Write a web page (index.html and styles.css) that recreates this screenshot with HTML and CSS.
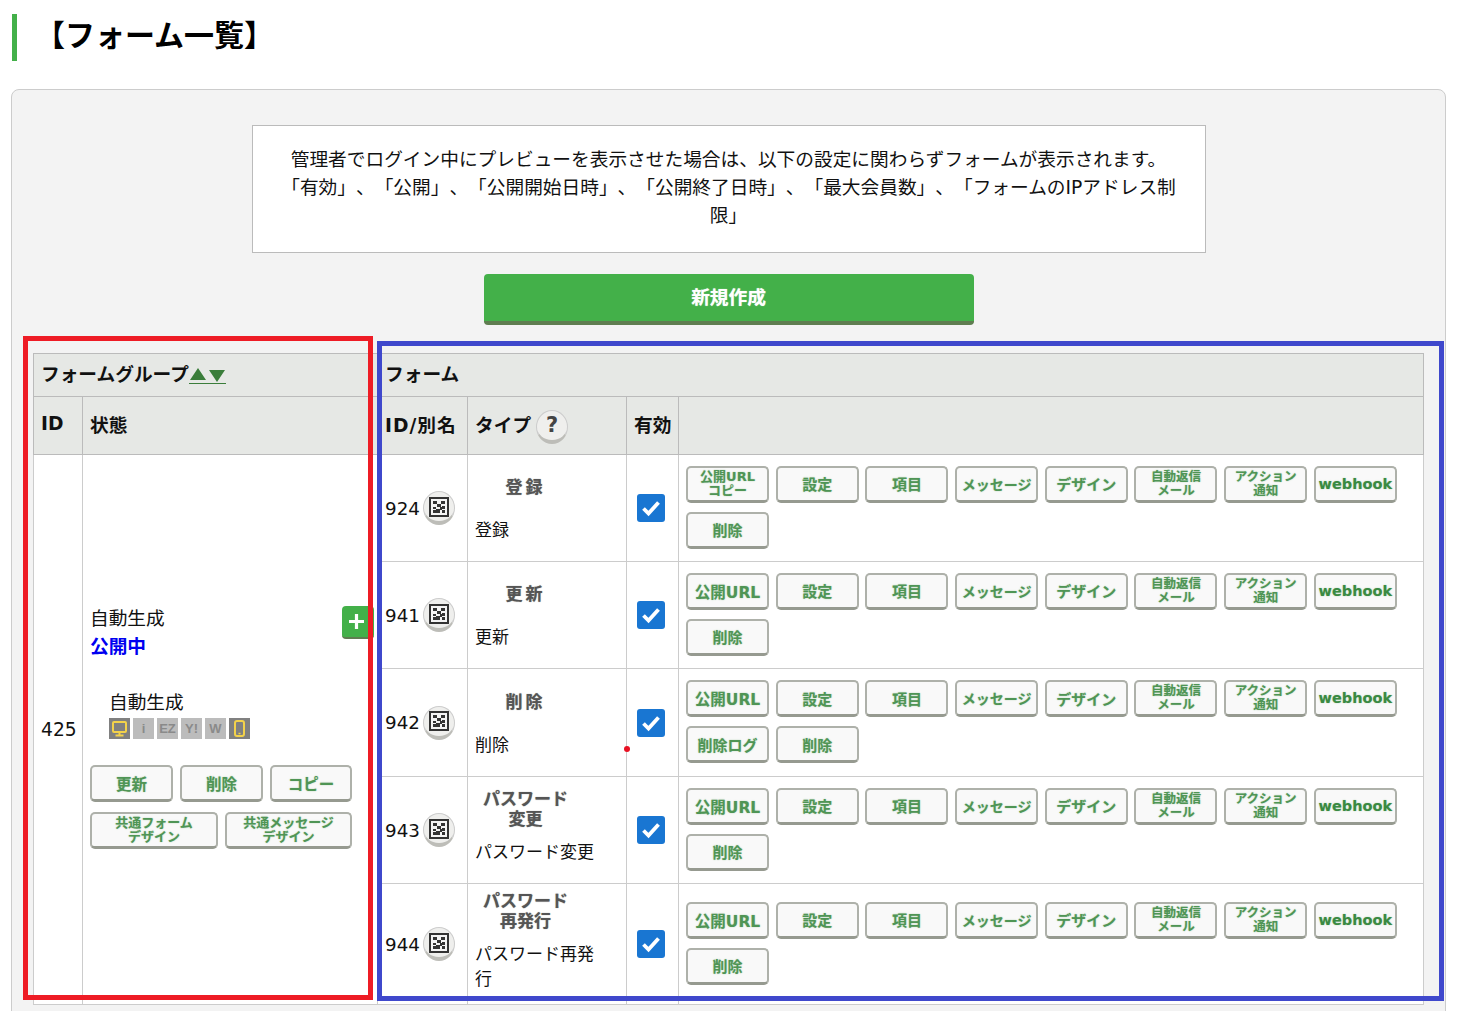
FILE: index.html
```html
<!DOCTYPE html>
<html lang="ja">
<head>
<meta charset="utf-8">
<title>フォーム一覧</title>
<link rel="stylesheet" href="styles.css">
</head>
<body>
<div class="page">
  <svg width="0" height="0" class="defs"><defs>
    <symbol id="qr" viewBox="0 0 20 20">
      <rect x="1" y="1" width="18" height="18" fill="#f4f4f4" stroke="#333" stroke-width="2"/>
      <path fill="#333" d="M4 4h4v3H4zM12 4h4v3h-4zM8 7h4v3H8zM4 10h3v2H4zM11 10h2v3h-2zM13 9h3v3h-3zM7 12h4v4H7zM4 13h3v3H4zM13 13h3v3h-3z"/>
    </symbol>
  </defs></svg>
  <h1 class="title">【フォーム一覧】</h1>
  <div class="panel">
    <div class="notice">管理者でログイン中にプレビューを表示させた場合は、以下の設定に関わらずフォームが表示されます。<br>「有効」、「公開」、「公開開始日時」、「公開終了日時」、「最大会員数」、「フォームのIPアドレス制<br>限」</div>
    <a class="new-btn">新規作成</a>
    <table class="grid">
      <colgroup><col class="c-id"><col class="c-state"><col class="c-fid"><col class="c-type"><col class="c-on"><col class="c-act"></colgroup>
      <thead>
        <tr class="h1">
          <th colspan="2">フォームグループ<a class="sort"><svg width="37" height="16" viewBox="0 0 37 16"><path fill="#3a7d3a" d="M1 12L9 0l8 12zM20 2h16l-8 12z"/><path stroke="#3a7d3a" d="M0 15.500h37"/></svg></a></th>
          <th colspan="4">フォーム</th>
        </tr>
        <tr class="h2">
          <th>ID</th><th>状態</th><th class="tight">ID/別名</th>
          <th><span class="with-help">タイプ<span class="round help">?</span></span></th>
          <th>有効</th><th></th>
        </tr>
      </thead>
      <tbody>
        <tr class="r1">
          <td rowspan="5">425</td>
          <td rowspan="5" class="group">
            <a class="plus"><svg viewBox="0 0 14 14" width="15" height="15"><path d="M7 0v14M0 7h14" stroke="#fff" stroke-width="3"/></svg></a>
            <div class="gname">自動生成</div>
            <div class="gstate">公開中</div>
            <div class="gsub">自動生成</div>
            <div class="devices">
              <span class="dev dev-on"><svg viewBox="0 0 21 21" width="21" height="21"><rect x="4" y="4" width="13" height="10" rx="1" fill="none" stroke="#f3d24a" stroke-width="2"/><path d="M10.500 14v3M6.500 17.500h8" stroke="#f3d24a" stroke-width="2"/></svg></span>
              <span class="dev">i</span><span class="dev">EZ</span><span class="dev">Y!</span><span class="dev">W</span>
              <span class="dev dev-on"><svg viewBox="0 0 21 21" width="21" height="21"><rect x="6" y="3" width="9" height="15" rx="2" fill="none" stroke="#f3d24a" stroke-width="2"/><path d="M9.500 15.500h2" stroke="#f3d24a" stroke-width="1.500"/></svg></span>
            </div>
            <div class="gbtns">
              <a class="btn s16 w3">更新</a><a class="btn s16 w3">削除</a><a class="btn s16 w3">コピー</a>
              <a class="btn s13 w2">共通フォーム<br>デザイン</a><a class="btn s13 w2">共通メッセージ<br>デザイン</a>
            </div>
          </td>
          <td><span class="fid">924<span class="round"><svg width="20" height="20"><use href="#qr"/></svg></span></span></td>
          <td class="type"><div class="tlabel wide">登録</div><div class="tname">登録</div></td>
          <td class="on"><span class="check"><svg viewBox="0 0 28 28" width="28" height="28"><path d="M6.500 14.500l5 5 10-11" fill="none" stroke="#fff" stroke-width="3.800"/></svg></span></td>
          <td class="acts"><div class="btns">
            <a class="btn s13">公開URL<br>コピー</a><a class="btn s15">設定</a><a class="btn s15">項目</a><a class="btn s14">メッセージ</a><a class="btn s15">デザイン</a><a class="btn s12">自動返信<br>メール</a><a class="btn s12">アクション<br>通知</a><a class="btn hook">webhook</a><a class="btn s15">削除</a>
          </div></td>
        </tr>
        <tr class="r1">
          <td><span class="fid">941<span class="round"><svg width="20" height="20"><use href="#qr"/></svg></span></span></td>
          <td class="type"><div class="tlabel wide">更新</div><div class="tname">更新</div></td>
          <td class="on"><span class="check"><svg viewBox="0 0 28 28" width="28" height="28"><path d="M6.500 14.500l5 5 10-11" fill="none" stroke="#fff" stroke-width="3.800"/></svg></span></td>
          <td class="acts"><div class="btns">
            <a class="btn s16">公開URL</a><a class="btn s15">設定</a><a class="btn s15">項目</a><a class="btn s14">メッセージ</a><a class="btn s15">デザイン</a><a class="btn s12">自動返信<br>メール</a><a class="btn s12">アクション<br>通知</a><a class="btn hook">webhook</a><a class="btn s15">削除</a>
          </div></td>
        </tr>
        <tr class="r3">
          <td><span class="fid">942<span class="round"><svg width="20" height="20"><use href="#qr"/></svg></span></span></td>
          <td class="type"><div class="tlabel wide">削除</div><div class="tname">削除</div></td>
          <td class="on"><span class="check"><svg viewBox="0 0 28 28" width="28" height="28"><path d="M6.500 14.500l5 5 10-11" fill="none" stroke="#fff" stroke-width="3.800"/></svg></span></td>
          <td class="acts"><div class="btns">
            <a class="btn s16">公開URL</a><a class="btn s15">設定</a><a class="btn s15">項目</a><a class="btn s14">メッセージ</a><a class="btn s15">デザイン</a><a class="btn s12">自動返信<br>メール</a><a class="btn s12">アクション<br>通知</a><a class="btn hook">webhook</a><a class="btn s15">削除ログ</a><a class="btn s15">削除</a>
          </div></td>
        </tr>
        <tr class="r1">
          <td><span class="fid">943<span class="round"><svg width="20" height="20"><use href="#qr"/></svg></span></span></td>
          <td class="type"><div class="tlabel">パスワード<br>変更</div><div class="tname">パスワード変更</div></td>
          <td class="on"><span class="check"><svg viewBox="0 0 28 28" width="28" height="28"><path d="M6.500 14.500l5 5 10-11" fill="none" stroke="#fff" stroke-width="3.800"/></svg></span></td>
          <td class="acts"><div class="btns">
            <a class="btn s16">公開URL</a><a class="btn s15">設定</a><a class="btn s15">項目</a><a class="btn s14">メッセージ</a><a class="btn s15">デザイン</a><a class="btn s12">自動返信<br>メール</a><a class="btn s12">アクション<br>通知</a><a class="btn hook">webhook</a><a class="btn s15">削除</a>
          </div></td>
        </tr>
        <tr class="r5">
          <td><span class="fid">944<span class="round"><svg width="20" height="20"><use href="#qr"/></svg></span></span></td>
          <td class="type"><div class="tlabel">パスワード<br>再発行</div><div class="tname">パスワード再発行</div></td>
          <td class="on"><span class="check"><svg viewBox="0 0 28 28" width="28" height="28"><path d="M6.500 14.500l5 5 10-11" fill="none" stroke="#fff" stroke-width="3.800"/></svg></span></td>
          <td class="acts"><div class="btns">
            <a class="btn s16">公開URL</a><a class="btn s15">設定</a><a class="btn s15">項目</a><a class="btn s14">メッセージ</a><a class="btn s15">デザイン</a><a class="btn s12">自動返信<br>メール</a><a class="btn s12">アクション<br>通知</a><a class="btn hook">webhook</a><a class="btn s15">削除</a>
          </div></td>
        </tr>
      </tbody>
    </table>
  </div>
  <div class="mark red"></div>
  <div class="mark blue"></div>
  <div class="dot"></div>
</div>
</body>
</html>
```
FILE: styles.css
```css
* { box-sizing: border-box; }
html, body { margin: 0; height: 100%; overflow: hidden; background: #fff; }
body { font-family: "DejaVu Sans", "Noto Sans CJK JP", sans-serif; font-size: 18.7px; color: #111; text-spacing-trim: space-all; }
.page { position: relative; height: 1011px; overflow: hidden; }
.defs { position: absolute; }
.title { margin: 14px 0 28px 12px; height: 47px; border-left: 5px solid #43b049; padding-left: 18px; font-size: 30px; line-height: 44px; font-weight: 700; color: #000; }
.panel { margin: 0 15px 0 11px; padding: 35px 21px 20px; border: 1px solid #ccc; border-radius: 8px; background: #f3f3f3; }
.notice { width: 954px; height: 128px; margin: 0 auto 21px; padding: 20px 20px; border: 1px solid #bbb; background: #fff; text-align: center; line-height: 28px; }
.new-btn { display: block; width: 490px; height: 51px; margin: 0 auto 28px; border-radius: 4px; border-bottom: 4px solid #5f7d50; background: #43b049; color: #fff; font-weight: 700; font-size: 18.7px; line-height: 47px; text-align: center; text-shadow: 0 0 1px #d0e8d0; }
.grid { width: 1390px; table-layout: fixed; border-collapse: collapse; background: #fff; }
.c-id { width: 49px; } .c-state { width: 295px; } .c-fid { width: 90px; } .c-type { width: 159px; } .c-on { width: 52px; } .c-act { width: 745px; }
.grid th { background: #e6e8e5; border: 1px solid #bbb; padding: 0 0 5px 7px; text-align: left; font-weight: 700; font-size: 18.7px; white-space: nowrap; }
.grid td { border: 1px solid #ccc; padding: 0 7px; vertical-align: middle; }
.grid th.tight { letter-spacing: 1px; }
.h1 { height: 43px; }
.h2 { height: 58px; }
.sort svg { vertical-align: -3px; }
.r1 { height: 107px; } .r3 { height: 108px; } .r5 { height: 121px; }
.with-help { display: inline-flex; align-items: center; gap: 5px; }
.round { display: inline-flex; align-items: center; justify-content: center; width: 32px; height: 34px; border-radius: 50%; background: #efefed; border: 1px solid #ccc; border-bottom: 4px solid #bdbdb8; flex: none; }
.help { font-size: 21px; font-weight: 700; color: #444; margin-top: 7px; }
.fid { display: inline-flex; align-items: center; gap: 3px; white-space: nowrap; font-size: 18.3px; }
.type { padding-bottom: 6px !important; }
.tlabel { display: flex; align-items: center; justify-content: center; width: 101px; height: 40px; margin-bottom: 11px; text-align: center; font-size: 17px; line-height: 20px; font-weight: 700; color: #555; text-shadow: 0 0 1px #888; }
.wide { letter-spacing: 3px; }
.tname { width: 125px; font-size: 17px; line-height: 25px; }
.on { padding: 0 10px !important; }
.check { display: block; width: 28px; height: 28px; border-radius: 3px; background: #1976d2; }
.check svg { display: block; }
.btns { display: flex; flex-wrap: wrap; gap: 9px 6.7px; }
.btn { display: flex; align-items: center; justify-content: center; width: 83px; height: 37px; border: 2px solid #aeb1aa; border-bottom-width: 3px; border-bottom-color: #969a90; border-radius: 5px; background: #f9f9f9; color: #4f9555; font-weight: 700; text-align: center; text-shadow: 0 0 1.5px #a5c8a8; white-space: nowrap; }
.s16 { font-size: 15.5px; } .s15 { font-size: 15px; } .s14 { font-size: 14px; }
.s13 { font-size: 13px; line-height: 14px; } .s12 { font-size: 12.5px; line-height: 14px; }
.hook { font-size: 14.5px; color: #3a8a42; }
.acts { padding: 0 0 2px 7px !important; }
.group { position: relative; padding: 0 0 5px 7px !important; }
.plus { position: absolute; left: 259px; top: 151px; display: flex; align-items: center; justify-content: center; width: 32px; height: 33px; border-radius: 4px; border-bottom: 2px solid #5f7d50; background: #43b049; padding-right: 3px; }
.gname { line-height: 28px; }
.gstate { line-height: 28px; font-weight: 700; color: #0000f0; margin-bottom: 28px; }
.gsub { line-height: 28px; margin-left: 19px; }
.devices { display: flex; gap: 3px; margin: 1px 0 26px 19px; }
.dev { display: flex; align-items: center; justify-content: center; width: 21px; height: 21px; background: #bcbcbc; color: #8a8a8a; font-family: "Liberation Sans", sans-serif; font-size: 13px; font-weight: 700; }
.dev-on { background: #808080; }
.gbtns { display: flex; flex-wrap: wrap; gap: 10px 7px; width: 262px; }
.w3 { width: 83px; } .w3:nth-child(3) { width: 82px; }
.w2 { width: 128px; }
.w2:nth-child(5) { width: 127px; }
.mark { position: absolute; border-style: solid; border-width: 5px; }
.red { left: 23px; top: 336px; width: 350px; height: 664px; border-color: #ee1c25; }
.blue { left: 377px; top: 341px; width: 1067px; height: 660px; border-color: #3f48cc; }
.dot { position: absolute; left: 624px; top: 746px; width: 6px; height: 6px; border-radius: 50%; background: #e81123; }
```
